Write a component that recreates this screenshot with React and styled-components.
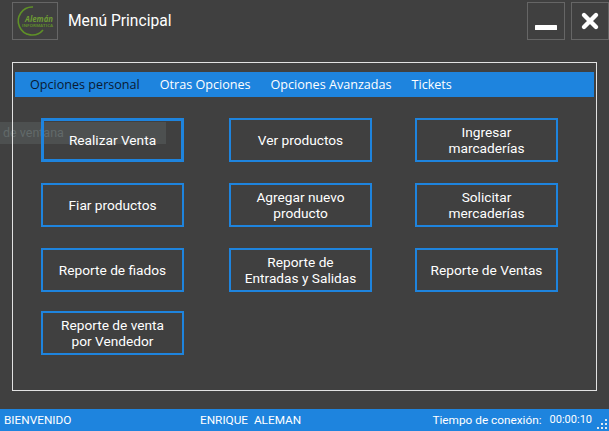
import React from 'react';
import styled, { createGlobalStyle } from 'styled-components';

const GlobalStyle = createGlobalStyle`
  html, body { margin: 0; padding: 0; background: #404040; }
  body { font-family: Roboto, "Open Sans", "Liberation Sans", sans-serif; }
`;

const Page = styled.div`
  position: relative;
  width: 609px;
  height: 431px;
  display: flex;
  flex-direction: column;
  background: #404040;
  overflow: hidden;
`;

const TitleBar = styled.header`
  height: 40px;
  padding: 2px 0 0 12px;
  box-sizing: border-box;
  display: flex;
  align-items: flex-start;
`;

const LogoBox = styled.div`
  width: 46px;
  height: 38px;
  box-sizing: border-box;
  border: 1px solid #666;
  display: flex;
  align-items: center;
  justify-content: center;
`;

const Title = styled.h1`
  margin: 8px 0 0 10px;
  font-size: 15.6px;
  line-height: 22px;
  font-weight: 400;
  color: #fff;
  flex: 1;
`;

const WindowButton = styled.button`
  width: 38px;
  height: 38px;
  margin-right: ${p => p.$right}px;
  padding: 0;
  box-sizing: border-box;
  border: 1px solid #666;
  background: transparent;
  display: flex;
  align-items: center;
  justify-content: center;
`;

const Panel = styled.section`
  position: relative;
  z-index: 1;
  width: 585px;
  height: 329px;
  margin: 22px 0 0 12px;
  padding: 9px 2px 0;
  box-sizing: border-box;
  border: 1px solid #e2e2e2;
`;

const TabBar = styled.nav`
  height: 25px;
  padding-left: 5px;
  display: flex;
  align-items: center;
  background: #1e84de;
`;

const Tab = styled.span`
  padding: 0 10px;
  font-family: "Open Sans", sans-serif;
  font-size: 12.6px;
  line-height: 25px;
  color: ${p => (p.$active ? '#0a1a33' : '#fff')};
`;

const ButtonGrid = styled.div`
  margin: 21px 0 0 26px;
  display: grid;
  grid-template-columns: 188px 186px 143px;
  grid-template-rows: 65px 65px 63px 44px;
`;

const MenuButton = styled.button`
  width: 143px;
  height: 44px;
  padding: 0 6px;
  box-sizing: border-box;
  background: transparent;
  border: ${p => (p.$focused ? 3 : 2)}px solid #1e84de;
  color: #fff;
  font-family: inherit;
  font-size: 13.7px;
  line-height: 16px;
  text-align: center;
`;

const StatusBar = styled.footer`
  position: relative;
  margin-top: auto;
  height: 22px;
  padding: 0 17px 0 4px;
  display: grid;
  grid-template-columns: 196px 1fr auto;
  align-items: center;
  background: #1e84de;
  color: #fff;
  font-size: 11.8px;
  line-height: 22px;
`;

const ConnectionTime = styled.span`
  display: flex;
  align-items: center;
  gap: 8px;
`;

const Clock = styled.span`
  font-size: 11px;
`;

const Ghost = styled.div`
  position: absolute;
  left: 0;
  top: 122px;
  width: 166px;
  height: 22px;
  padding-left: 3px;
  box-sizing: border-box;
  background: rgba(110, 120, 120, 0.3);
  color: #626a6a;
  font-size: 12.5px;
  line-height: 22px;
  pointer-events: none;
`;

const Grip = styled.svg`
  position: absolute;
  right: 1px;
  bottom: 1px;
`;

const tabs = ['Opciones personal', 'Otras Opciones', 'Opciones Avanzadas', 'Tickets'];

const actions = [
  ['Realizar Venta'],
  ['Ver productos'],
  ['Ingresar', 'marcaderías'],
  ['Fiar productos'],
  ['Agregar nuevo', 'producto'],
  ['Solicitar', 'mercaderías'],
  ['Reporte de fiados'],
  ['Reporte de', 'Entradas y Salidas'],
  ['Reporte de Ventas'],
  ['Reporte de venta', 'por Vendedor'],
];

function Logo() {
  return (
    <svg width="44" height="36" viewBox="0 0 44 36">
      <path d="M20 4 A14 14 0 1 0 30 27" fill="none" stroke="#5f9127" strokeWidth="1.6" />
      <text x="12" y="19" fontSize="9.5" fontWeight="700" fontStyle="italic" fill="#6d9a35" fontFamily="Open Sans, sans-serif" textLength="28" lengthAdjust="spacingAndGlyphs">Alemán</text>
      <text x="9" y="24" fontSize="3.6" fontWeight="700" fill="#5f8a2c" fontFamily="Open Sans, sans-serif" textLength="31" lengthAdjust="spacingAndGlyphs">INFORMATICA</text>
    </svg>
  );
}

export default function App() {
  return (
    <Page>
      <GlobalStyle />
      <TitleBar>
        <LogoBox><Logo /></LogoBox>
        <Title>Menú Principal</Title>
        <WindowButton $right={6} aria-label="Minimizar">
          <svg width="36" height="36" viewBox="0 0 36 36">
            <rect x="7" y="22" width="22" height="5" rx="0.5" fill="#fff" />
          </svg>
        </WindowButton>
        <WindowButton $right={0} aria-label="Cerrar">
          <svg width="36" height="36" viewBox="0 0 36 36">
            <path d="M12 12 L24 24 M24 12 L12 24" stroke="#fff" strokeWidth="4.4" strokeLinecap="round" />
          </svg>
        </WindowButton>
      </TitleBar>

      <Ghost>de ventana</Ghost>

      <Panel>
        <TabBar>
          {tabs.map((t, i) => <Tab key={t} $active={i === 0}>{t}</Tab>)}
        </TabBar>
        <ButtonGrid>
          {actions.map((lines, i) => (
            <MenuButton key={lines[0]} $focused={i === 0}>
              {lines.map(l => <div key={l}>{l}</div>)}
            </MenuButton>
          ))}
        </ButtonGrid>
      </Panel>

      <StatusBar>
        <span>BIENVENIDO</span>
        <span>ENRIQUE&nbsp; ALEMAN</span>
        <ConnectionTime>
          <span>Tiempo de conexión:</span>
          <Clock>00:00:10</Clock>
        </ConnectionTime>
        <Grip width="12" height="12" viewBox="0 0 12 12" fill="#dfe9f2">
          <rect x="9" y="1" width="2" height="2" />
          <rect x="5" y="5" width="2" height="2" />
          <rect x="9" y="5" width="2" height="2" />
          <rect x="1" y="9" width="2" height="2" />
          <rect x="5" y="9" width="2" height="2" />
          <rect x="9" y="9" width="2" height="2" />
        </Grip>
      </StatusBar>
    </Page>
  );
}
